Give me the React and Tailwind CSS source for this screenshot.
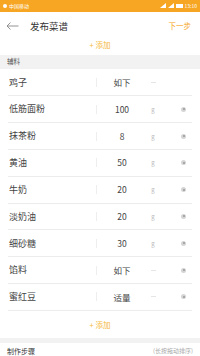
import React from "react";

const rows = [
  { name: "鸡子", amt: "如下", unit: "", del: false },
  { name: "低筋面粉", amt: "100", unit: "g", del: true },
  { name: "抹茶粉", amt: "8", unit: "g", del: true },
  { name: "黄油", amt: "50", unit: "g", del: true },
  { name: "牛奶", amt: "20", unit: "g", del: true },
  { name: "淡奶油", amt: "20", unit: "g", del: true },
  { name: "细砂糖", amt: "30", unit: "g", del: true },
  { name: "馅料", amt: "如下", unit: "", del: true },
  { name: "蜜红豆", amt: "适量", unit: "", del: true },
];

function Row({ r }) {
  return (
    <div className="mx-2 h-[27px] flex items-center border-b border-[#ececec] text-[9px] text-[#444]">
      <div className="w-[88px] pl-[1px]">{r.name}</div>
      <div className="w-px h-[9px] bg-[#eeeeee]" />
      <div className="w-[50px] text-center text-[8.5px]">{r.amt}</div>
      <div className="w-[12px] text-[6px] text-[#bbb] flex justify-center">
        {r.unit ? r.unit : <span className="block w-[5px] h-px bg-[#e5e5e5]" />}
      </div>
      <div className="flex-1 flex justify-end pr-[6px]">
        {r.del && (
          <span className="w-[5px] h-[5px] rounded-full bg-[#d5d5d5] flex items-center justify-center">
            <span className="w-[2px] h-[2px] rounded-full bg-[#999]" />
          </span>
        )}
      </div>
    </div>
  );
}

export default function App() {
  return (
    <div
      className="w-[200px] h-[356px] overflow-hidden bg-white flex flex-col"
      style={{ fontFamily: '"Noto Sans CJK SC", "Noto Sans", sans-serif' }}
    >
      <div className="h-[12px] bg-[#f6a623] flex items-center justify-between px-[3px] text-white text-[5px] leading-none">
        <div className="flex items-center gap-[2px]">
          <span className="w-[4px] h-[4px] rounded-full bg-white" />
          <span>中国移动</span>
        </div>
        <div className="flex items-center gap-[2px]">
          <svg width="6" height="5" viewBox="0 0 6 5"><path d="M0 5L6 0V5Z" fill="white" /></svg>
          <svg width="6" height="5" viewBox="0 0 6 5"><path d="M0 5L6 0V5Z" fill="white" /></svg>
          <span className="w-[7px] h-[4px] bg-white" />
          <span>13:10</span>
        </div>
      </div>
      <div className="h-[28px] flex items-center justify-between pl-[6px] pr-[9px]">
        <div className="flex items-center">
          <svg width="13" height="8" viewBox="0 0 13 8" className="mr-[11px]">
            <path d="M12.5 4H1M4.5 0.5L1 4L4.5 7.5" stroke="#888" strokeWidth="0.9" fill="none" />
          </svg>
          <span className="text-[9.5px] text-[#333]">发布菜谱</span>
        </div>
        <span className="text-[7.5px] text-[#f5a623]">下一步</span>
      </div>
      <div className="h-[15px] flex items-start justify-center text-[7.5px] text-[#f5b93a] leading-none pt-[1px]">
        <span>+ 添加</span>
      </div>
      <div className="h-[15px] bg-[#f2f2f2] flex items-center px-[7px] text-[6.5px] text-[#555]">辅料</div>
      {rows.map((r, i) => (
        <Row key={i} r={r} />
      ))}
      <div className="h-[27px] flex items-center justify-center text-[7.5px] text-[#f5b93a]">
        <span>+ 添加</span>
      </div>
      <div className="h-[5px] bg-[#f2f2f2]" />
      <div className="flex items-center justify-between px-[7px] pt-[3px] text-[7px]">
        <span className="text-[#333]">制作步骤</span>
        <span className="text-[#aaa] text-[6px]">(长按拖动排序)</span>
      </div>
    </div>
  );
}
